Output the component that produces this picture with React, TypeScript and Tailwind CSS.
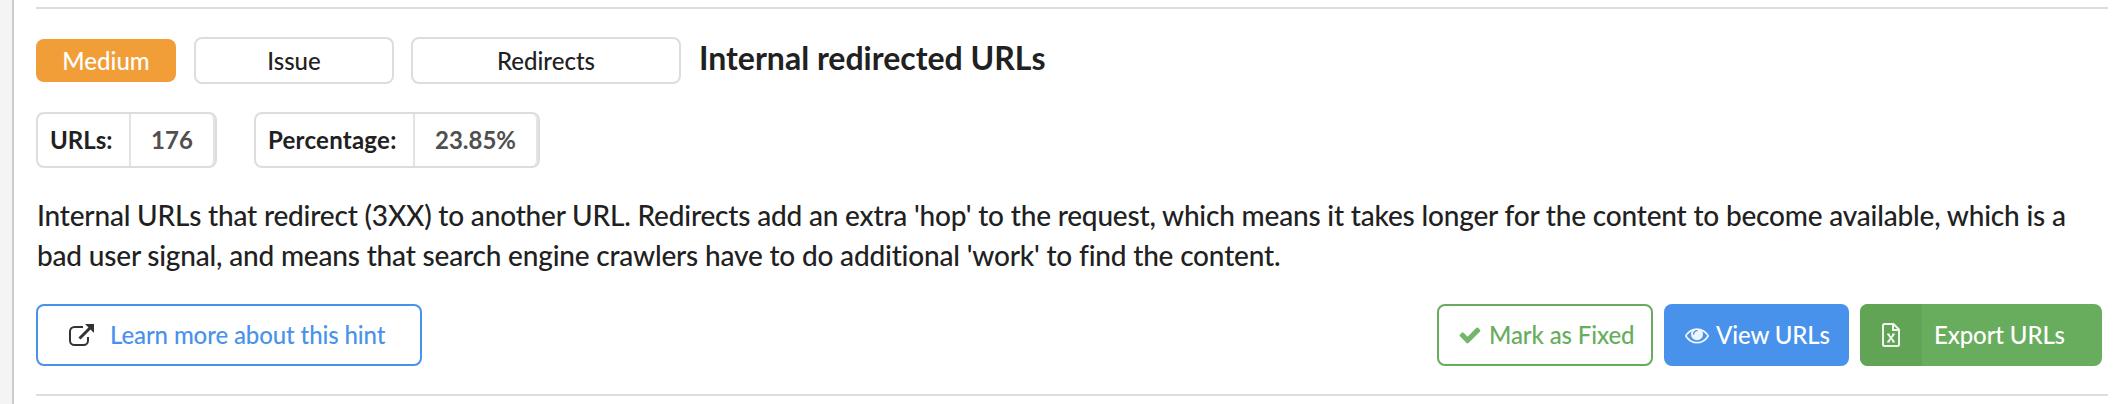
import React from "react";

const stats = [
  { label: "URLs:", value: "176", box: "w-[181px]", head: "w-[93px]" },
  { label: "Percentage:", value: "23.85%", box: "w-[286px]", head: "w-[159px] tracking-[0.25px]" },
];

function OpenIcon() {
  return (
    <svg viewBox="0 0 25 22" className="h-[22px] w-[25px]" fill="none">
      <path d="M14 3H5.5A4.5 4.5 0 0 0 1 7.500v9A4.5 4.5 0 0 0 5.5 21h9a4.500 4.500 0 0 0 4.500-4.500V13" stroke="#333" strokeWidth="2" />
      <path d="M10.500 14.500 21 4" stroke="#333" strokeWidth="3" />
      <path d="M16 0h9v9z" fill="#333" />
    </svg>
  );
}

function CheckIcon() {
  return (
    <svg viewBox="0 0 1792 1792" className="mr-[7px] size-6 opacity-90" fill="currentColor">
      <path d="M1671 566q0 40-28 68l-724 724-136 136q-28 28-68 28t-68-28l-136-136-362-362q-28-28-28-68t28-68l136-136q28-28 68-28t68 28l294 295 656-657q28-28 68-28t68 28l136 136q28 28 28 68z" />
    </svg>
  );
}

function EyeIcon() {
  return (
    <svg viewBox="0 0 1792 1792" className="mr-[7px] size-6 opacity-90" fill="currentColor">
      <path d="M1664 960q-152-236-381-353 61 104 61 225 0 185-131.5 316.5t-316.5 131.5-316.5-131.5-131.5-316.5q0-121 61-225-229 117-381 353 133 205 333.5 326.5t434.5 121.5 434.5-121.5 333.5-326.5zm-720-384q0-20-14-34t-34-14q-125 0-214.5 89.5t-89.5 214.5q0 20 14 34t34 14 34-14 14-34q0-86 61-147t147-61q20 0 34-14t14-34zm848 384q0 34-20 69-140 230-376.5 368.5t-499.5 138.5-499.5-139-376.5-368q-20-35-20-69t20-69q140-229 376.5-368t499.5-139 499.5 139 376.5 368q20 35 20 69z" />
    </svg>
  );
}

function ExcelIcon() {
  return (
    <svg viewBox="0 0 18 24" className="h-6 w-[18px] opacity-90" fill="none" stroke="currentColor" strokeWidth="2">
      <path d="M11.500 1H2.500A1.500 1.500 0 0 0 1 2.500v19A1.500 1.500 0 0 0 2.500 23h13a1.500 1.500 0 0 0 1.500-1.500V6.500z" />
      <path d="M11 1.500V7h5.500" />
      <path d="M6.300 11.500l5.400 7M11.700 11.500l-5.400 7" />
      <path d="M5.200 11.300h2.600M10.200 11.300h2.600M5.200 18.700h2.600M10.200 18.700h2.600" strokeWidth="1.500" />
    </svg>
  );
}

export default function App() {
  return (
    <div className="flex h-[404px] w-[2124px] overflow-hidden bg-white font-['Lato',sans-serif] text-[#212121]">
      <div className="w-3.5 shrink-0 border-r-2 border-[#ccc] bg-[#f4f4f4]" />
      <main className="ml-[22px] mt-[7px] h-[389px] w-[2072px] border-y-2 border-[#ddd]">
        <div className="mt-7 flex h-[47px] items-center text-2xl font-medium">
          <span className="flex h-[43px] w-[140px] items-center justify-center rounded-lg bg-[#f19e38] text-white">Medium</span>
          <span className="ml-[18px] flex h-full w-[200px] items-center justify-center rounded-lg border-2 border-[#ddd]">Issue</span>
          <span className="ml-[17px] flex h-full w-[270px] items-center justify-center rounded-lg border-2 border-[#ddd]">Redirects</span>
          <h2 className="mb-[5px] ml-[18px] text-[32px] font-bold leading-none">Internal redirected URLs</h2>
        </div>

        <div className="mt-7 flex gap-[37px] text-2xl font-bold">
          {stats.map((s) => (
            <div key={s.label} className={`flex h-14 rounded-lg border-2 border-[#ddd] ${s.box}`}>
              <span className={`flex items-center border-r-2 border-[#e4e4e4] pl-3 ${s.head}`}>{s.label}</span>
              <span className="flex flex-1 items-center justify-center rounded-r-md border-r-2 border-[#e4e4e4] text-[#505050]">{s.value}</span>
            </div>
          ))}
        </div>

        <p className="-mt-px pl-px pt-7 text-[28px] font-medium leading-10 tracking-[-0.185px]">
          Internal URLs that redirect (3XX) to another URL. Redirects add an extra 'hop' to the request, which means it takes longer for the content to become available, which is a bad user signal, and means that search engine crawlers have to do additional 'work' to find the content.
        </p>

        <div className="mt-[29px] flex h-[62px] items-center text-2xl font-medium tracking-[-0.11px]">
          <a className="flex h-full w-[386px] items-center rounded-lg border-2 border-[#4992eb] pl-[31px] text-[#4992eb]">
            <OpenIcon />
            <span className="ml-4">Learn more about this hint</span>
          </a>
          <button className="ml-auto flex h-full w-[216px] items-center rounded-lg border-2 border-[#68ad5d] pl-[19px] text-[#68ad5d]">
            <CheckIcon />
            Mark as Fixed
          </button>
          <button className="ml-[11px] flex h-full w-[185px] items-center rounded-lg bg-[#4992eb] pl-[21px] text-white">
            <EyeIcon />
            View URLs
          </button>
          <button className="ml-[11px] mr-1.5 flex h-full w-[242px] items-center overflow-hidden rounded-lg bg-[#68ad5d] text-white">
            <span className="flex h-full w-[62px] items-center justify-center bg-[#61a456]">
              <ExcelIcon />
            </span>
            <span className="ml-3">Export URLs</span>
          </button>
        </div>
      </main>
    </div>
  );
}
